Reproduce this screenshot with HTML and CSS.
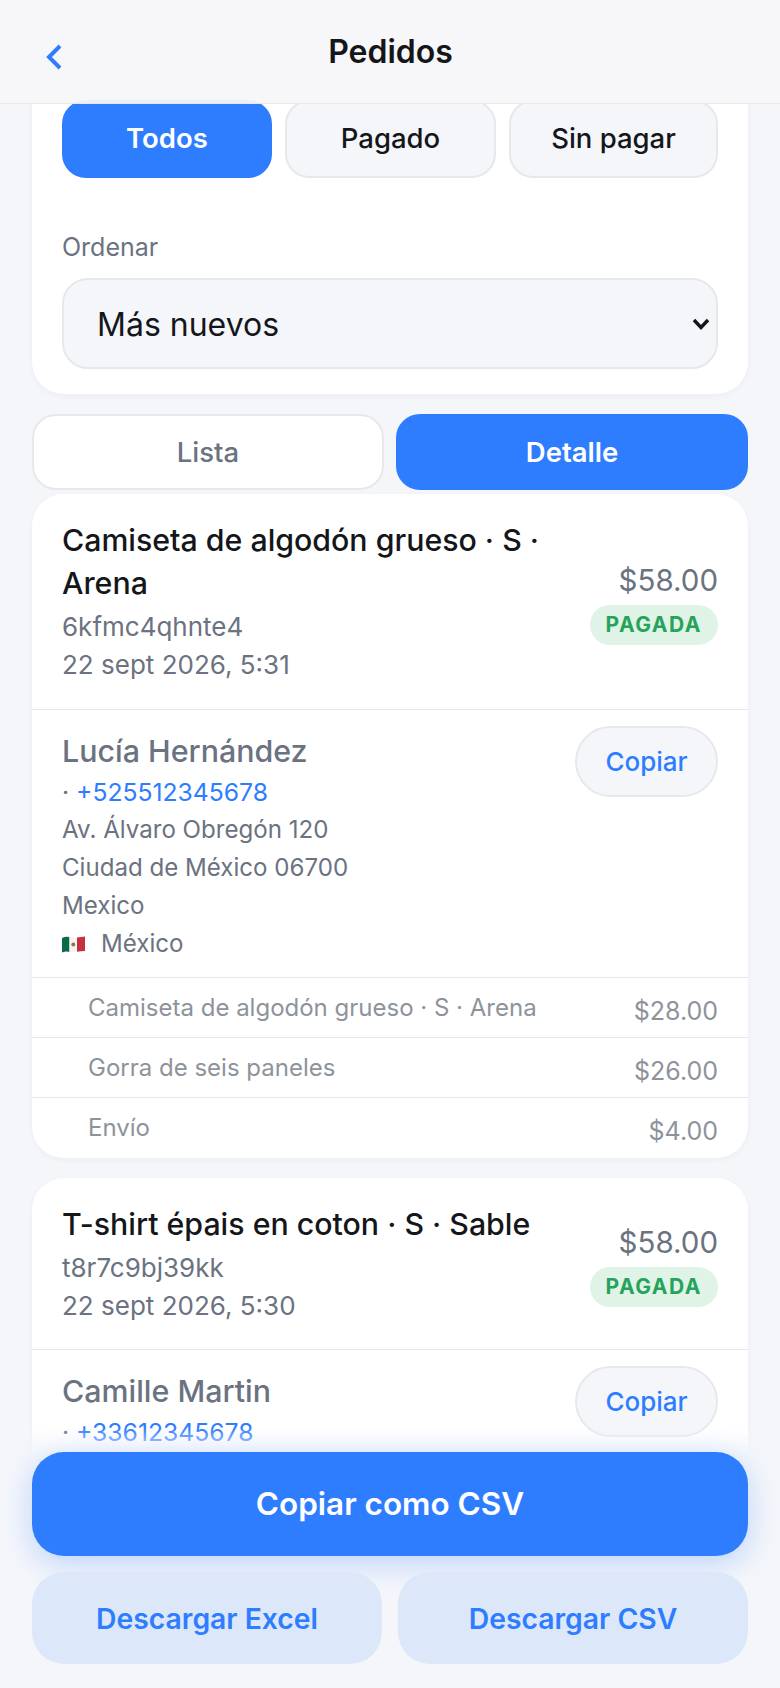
FILE: index.html
```html
<!DOCTYPE html>
<html lang="es">
<head>
    <meta charset="UTF-8">
    <meta name="viewport" content="width=device-width, initial-scale=1.0">
    <title>Pedidos</title>
    <link rel="stylesheet" href="styles.css">
</head>
<body>
    <div class="screen">
        <header class="topbar">
            <a class="back" href="#" aria-label="Volver">
                <svg width="18" height="26" viewBox="0 0 18 26"><path d="M16 2 L5 13 L16 24" fill="none" stroke="#2f7dff" stroke-width="4"/></svg>
            </a>
            <h1>Pedidos</h1>
        </header>

        <main class="content">
            <section class="panel">
                <div class="filters">
                    <button class="filter active">Todos</button>
                    <button class="filter">Pagado</button>
                    <button class="filter">Sin pagar</button>
                </div>
                <label class="sort-label" for="sort">Ordenar</label>
                <div class="select-wrap">
                    <select id="sort" class="sort">
                        <option>Más nuevos</option>
                        <option>Más antiguos</option>
                    </select>
                    <svg class="select-arrow" width="18" height="12" viewBox="0 0 18 12"><path d="M2 2 L9 9.5 L16 2" fill="none" stroke="#14161a" stroke-width="3.4"/></svg>
                </div>
            </section>

            <div class="views">
                <button class="view">Lista</button>
                <button class="view active">Detalle</button>
            </div>

            <article class="card">
                <div class="order-head">
                    <div class="order-info">
                        <div class="order-title">Camiseta de algodón grueso · S · Arena</div>
                        <div class="order-sub">6kfmc4qhnte4</div>
                        <div class="order-sub">22 sept 2026, 5:31</div>
                    </div>
                    <div class="order-side">
                        <div class="price">$58.00</div>
                        <span class="badge">PAGADA</span>
                    </div>
                </div>
                <div class="customer">
                    <div class="customer-info">
                        <div class="customer-name">Lucía Hernández</div>
                        <div class="customer-line phone">· <a href="#">+525512345678</a></div>
                        <div class="customer-line">Av. Álvaro Obregón 120</div>
                        <div class="customer-line">Ciudad de México 06700</div>
                        <div class="customer-line">Mexico</div>
                        <div class="customer-line country">
                            <svg class="flag" width="23" height="17" viewBox="0 0 23 17">
                                <path d="M0 2 Q4 0 7.5 1 V16 Q4 15 0 16.5 Z" fill="#0b6b47"/>
                                <path d="M7.5 1 Q11 2 15 1.6 V15.8 Q11 16.6 7.5 16 Z" fill="#f4f4f2"/>
                                <path d="M15 1.6 Q19 1 23 .6 V15 Q19 15 15 15.8 Z" fill="#c8303f"/>
                                <circle cx="11.3" cy="8.6" r="2" fill="#8a7a45"/>
                            </svg>
                            <span>México</span>
                        </div>
                    </div>
                    <button class="copy">Copiar</button>
                </div>
                <div class="item"><span>Camiseta de algodón grueso · S · Arena</span><span class="amount">$28.00</span></div>
                <div class="item"><span>Gorra de seis paneles</span><span class="amount">$26.00</span></div>
                <div class="item"><span>Envío</span><span class="amount">$4.00</span></div>
            </article>

            <article class="card second">
                <div class="order-head">
                    <div class="order-info">
                        <div class="order-title">T-shirt épais en coton · S · Sable</div>
                        <div class="order-sub">t8r7c9bj39kk</div>
                        <div class="order-sub">22 sept 2026, 5:30</div>
                    </div>
                    <div class="order-side">
                        <div class="price">$58.00</div>
                        <span class="badge">PAGADA</span>
                    </div>
                </div>
                <div class="customer">
                    <div class="customer-info">
                        <div class="customer-name">Camille Martin</div>
                        <div class="customer-line phone">· <a href="#">+33612345678</a></div>
                        <div class="customer-line">12 rue de la Paix</div>
                        <div class="customer-line">Paris 75002</div>
                    </div>
                    <button class="copy">Copiar</button>
                </div>
            </article>
        </main>

        <footer class="actions">
            <button class="action-main">Copiar como CSV</button>
            <div class="action-row">
                <button class="action-alt">Descargar Excel</button>
                <button class="action-alt">Descargar CSV</button>
            </div>
        </footer>
    </div>
</body>
</html>
```

FILE: styles.css
```css
* {
    box-sizing: border-box;
}

body {
    margin: 0;
    font-family: Inter, 'Liberation Sans', sans-serif;
    background-color: #f4f6fa;
    color: #14161a;
}

button, select {
    font-family: inherit;
}

a {
    color: #2f7dff;
    text-decoration: none;
}

.screen {
    position: relative;
    width: 780px;
    height: 1688px;
    overflow: hidden;
}

.topbar {
    position: absolute;
    top: 0;
    left: 0;
    right: 0;
    z-index: 2;
    height: 104px;
    display: flex;
    align-items: center;
    justify-content: center;
    background: rgba(246, 247, 250, 0.94);
    border-bottom: 1px solid #e6e8ec;
}

.topbar h1 {
    margin: 0;
    padding-left: 1px;
    font-size: 32px;
    font-weight: 600;
    line-height: 104px;
}

.back {
    position: absolute;
    left: 44px;
    top: 44px;
    line-height: 0;
}

.content {
    padding: 70px 32px 0;
}

.panel {
    background: white;
    border-radius: 32px;
    padding: 30px 30px 25px;
    box-shadow: 0 2px 6px rgba(30, 50, 90, 0.04);
}

.filters {
    display: grid;
    grid-template-columns: 210px 211px 209px;
    gap: 13px;
}

.filter {
    height: 78px;
    padding-bottom: 4px;
    border: 2px solid #e6e8ec;
    border-radius: 24px;
    background: #f4f6fa;
    font-size: 27.5px;
    font-weight: 500;
    color: #14161a;
}

.filter.active {
    background: #2f7dff;
    border-color: #2f7dff;
    color: white;
    font-weight: 600;
}

.sort-label {
    display: block;
    margin: 52px 0 14px;
    font-size: 25px;
    line-height: 34px;
    color: #6b7280;
}

.select-wrap {
    position: relative;
}

.sort {
    display: block;
    width: 100%;
    height: 91px;
    padding: 2px 33px 0;
    border: 2px solid #e6e8ec;
    border-radius: 26px;
    background: #f4f6fa;
    font-size: 32px;
    color: #14161a;
    appearance: none;
}

.select-arrow {
    position: absolute;
    right: 8px;
    top: 40px;
}

.views {
    display: grid;
    grid-template-columns: 352px 352px;
    gap: 12px;
    margin: 20px 0 4px;
}

.view {
    height: 76px;
    border: 2px solid #e6e8ec;
    border-radius: 24px;
    background: white;
    font-size: 27.5px;
    font-weight: 500;
    color: #6b7280;
}

.view.active {
    background: #2f7dff;
    border-color: #2f7dff;
    color: white;
    font-weight: 600;
}

.card {
    padding-bottom: 1px;
    background: white;
    border-radius: 32px;
    overflow: hidden;
    box-shadow: 0 2px 6px rgba(30, 50, 90, 0.04);
}

.card.second {
    margin-top: 20px;
}

.order-head {
    display: flex;
    align-items: center;
    gap: 20px;
    padding: 25px 30px 25px;
    border-bottom: 1px solid #e6e8ec;
}

.second .order-head {
    padding-bottom: 24px;
}

.order-info {
    flex: 1;
}

.order-title {
    margin-bottom: 3px;
    font-size: 30.3px;
    font-weight: 500;
    line-height: 43px;
}

.order-sub {
    font-size: 26px;
    line-height: 38px;
    color: #6b7280;
}

.order-side {
    display: flex;
    flex-direction: column;
    align-items: flex-end;
    gap: 4px;
}

.price {
    font-size: 29.5px;
    font-weight: 400;
    line-height: 42px;
    color: #6b7280;
}

.badge {
    height: 40px;
    padding: 0 16px;
    border-radius: 20px;
    background: #dff3e6;
    color: #25a35a;
    font-size: 21px;
    font-weight: 700;
    line-height: 40px;
    letter-spacing: 1.5px;
}

.customer {
    display: flex;
    align-items: flex-start;
    justify-content: space-between;
    padding: 16px 30px 14px;
}

.customer-info {
    padding-top: 3px;
}

.customer-name {
    font-size: 30.4px;
    font-weight: 500;
    line-height: 44px;
    color: #6b7280;
}

.customer-line {
    font-size: 24.1px;
    line-height: 38px;
    color: #6b7280;
}

.customer-line.phone {
    font-size: 24.7px;
}

.country {
    display: flex;
    align-items: center;
    gap: 16px;
}

.flag {
    flex: none;
}

.copy {
    width: 143px;
    height: 71px;
    border: 2px solid #e6e8ec;
    border-radius: 36px;
    background: #f4f6fa;
    color: #2f7dff;
    font-size: 26px;
    font-weight: 500;
}

.item {
    display: flex;
    justify-content: space-between;
    height: 60px;
    padding: 13px 30px 0 56px;
    border-top: 1px solid #e6e8ec;
    font-size: 24px;
    line-height: 34px;
    color: #8e939b;
}

.amount {
    margin-top: 3px;
    font-size: 25px;
}

.actions {
    position: absolute;
    left: 0;
    right: 0;
    bottom: 0;
    z-index: 2;
    padding: 24px 32px 24px;
    background: linear-gradient(to bottom, rgba(244, 246, 250, 0), #f4f6fa 28px);
}

.action-main {
    display: block;
    width: 100%;
    height: 104px;
    padding-bottom: 2px;
    border: none;
    border-radius: 32px;
    background: #2f7dff;
    color: white;
    font-size: 31.5px;
    font-weight: 600;
    box-shadow: 0 8px 30px rgba(47, 125, 255, 0.28);
}

.action-row {
    display: grid;
    grid-template-columns: 1fr 1fr;
    gap: 16px;
    margin-top: 16px;
}

.action-alt {
    height: 92px;
    padding-top: 2px;
    border: none;
    border-radius: 32px;
    background: #dce8f9;
    color: #2f7dff;
    font-size: 28.3px;
    font-weight: 600;
}
```
